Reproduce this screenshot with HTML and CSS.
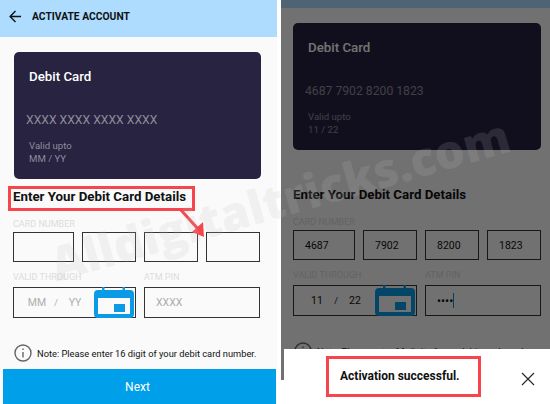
FILE: index.html
```html
<!DOCTYPE html>
<html>
<head>
  <meta charset="UTF-8">
  <title>Activate Account</title>
  <link rel="stylesheet" href="styles.css">
</head>
<body>
  <div class="page">

    <!-- before: empty form -->
    <div class="phone">
      <div class="topbar">
        <svg class="back-icon" viewBox="0 0 14 14"><path d="M13 7H1.500M7 1.200 1.200 7 7 12.800"/></svg>
        <span class="topbar-title">ACTIVATE ACCOUNT</span>
      </div>
      <div class="content">
        <div class="card">
          <div class="card-title">Debit Card</div>
          <div class="card-number">XXXX XXXX XXXX XXXX</div>
          <div class="card-meta">Valid upto</div>
          <div class="card-meta">MM / YY</div>
        </div>
        <h2 class="form-title">Enter Your Debit Card Details</h2>
        <div class="form-grid">
          <div class="field-label span-4">CARD NUMBER</div>
          <div class="field"></div>
          <div class="field"></div>
          <div class="field"></div>
          <div class="field"></div>
          <div class="field-label label-second span-2">VALID THROUGH</div>
          <div class="field-label label-second span-2">ATM PIN</div>
          <div class="field field-tall span-2 date-field placeholder">
            <span class="date-part">MM</span><span class="date-slash">/</span><span class="date-part">YY</span>
            <svg class="calendar-icon" viewBox="0 0 40 31"><path d="M8 0h2.500v3h18V0H31v3h5a4 4 0 0 1 4 4v20a4 4 0 0 1-4 4H4a4 4 0 0 1-4-4V7a4 4 0 0 1 4-4h4z"/><rect class="calendar-page" x="4" y="11" width="32" height="16"/><rect x="20" y="17" width="11" height="8"/></svg>
          </div>
          <div class="field field-tall span-2 placeholder">XXXX</div>
        </div>
        <div class="note">
          <svg class="info-icon" viewBox="0 0 18 18"><circle cx="9" cy="9" r="8"/><path d="M9 8v5.500M9 4.500v1.500"/></svg>
          <span>Note: Please enter 16 digit of your debit card number.</span>
        </div>
      </div>
      <div class="next-btn">Next</div>
      <div class="mark-box"></div>
      <svg class="mark-arrow" viewBox="0 0 30 34"><path d="M3 3 20 22"/><path class="mark-arrow-head" d="M26 30 14 25 25 15z"/></svg>
    </div>

    <!-- after: filled form with the bottom sheet -->
    <div class="phone phone-done">
      <div class="topbar"></div>
      <div class="content">
        <div class="card">
          <div class="card-title">Debit Card</div>
          <div class="card-number">4687 7902 8200 1823</div>
          <div class="card-meta">Valid upto</div>
          <div class="card-meta">11 / 22</div>
        </div>
        <h2 class="form-title">Enter Your Debit Card Details</h2>
        <div class="form-grid">
          <div class="field-label span-4">CARD NUMBER</div>
          <div class="field">4687</div>
          <div class="field">7902</div>
          <div class="field">8200</div>
          <div class="field">1823</div>
          <div class="field-label label-second span-2">VALID THROUGH</div>
          <div class="field-label label-second span-2">ATM PIN</div>
          <div class="field field-tall span-2 date-field">
            <span class="date-part">11</span><span class="date-slash">/</span><span class="date-part">22</span>
            <svg class="calendar-icon" viewBox="0 0 40 31"><path d="M8 0h2.500v3h18V0H31v3h5a4 4 0 0 1 4 4v20a4 4 0 0 1-4 4H4a4 4 0 0 1-4-4V7a4 4 0 0 1 4-4h4z"/><rect class="calendar-page" x="4" y="11" width="32" height="16"/><rect x="20" y="17" width="11" height="8"/></svg>
          </div>
          <div class="field field-tall span-2"><span class="pin-dots">••••</span><span class="caret"></span></div>
        </div>
        <div class="note">
          <svg class="info-icon" viewBox="0 0 18 18"><circle cx="9" cy="9" r="8"/><path d="M9 8v5.500M9 4.500v1.500"/></svg>
          <span>Note: Please enter 16 digit of your debit card number.</span>
        </div>
      </div>
      <div class="scrim"></div>
    </div>

    <div class="watermark">Alldigitaltricks.com</div>

    <div class="sheet">
      <div class="sheet-msg">Activation successful.</div>
      <svg class="close-icon" viewBox="0 0 14 14"><path d="M1 1 13 13M13 1 1 13"/></svg>
    </div>
  </div>
</body>
</html>
```

FILE: styles.css
```css
body {
  margin: 0;
  background: #fff;
  font-family: Roboto, "Liberation Sans", sans-serif;
  color: #111;
}
.page {
  position: relative;
  display: flex;
  gap: 4px;
  width: 550px;
  height: 404px;
  overflow: hidden;
}

/* phones */
.phone {
  position: relative;
  display: flex;
  flex-direction: column;
  width: 277px;
  height: 404px;
  background: #fafafa;
}
.phone-done {
  width: 269px;
  height: 380px;
  overflow: hidden;
}
.topbar {
  display: flex;
  align-items: center;
  gap: 10px;
  flex: none;
  box-sizing: border-box;
  height: 37px;
  padding: 0 0 5px 9px;
  background: #addcff;
}
.phone-done .topbar {
  height: 8px;
  padding: 0;
}
.back-icon {
  width: 13px;
  height: 13px;
  fill: none;
  stroke: #111;
  stroke-width: 1.5;
}
.topbar-title {
  font-size: 10.300px;
  font-weight: 700;
}
.content {
  flex: 1;
  padding: 15px 0 0 13px;
}
.phone-done .content {
  padding-left: 12px;
}

/* card */
.card {
  box-sizing: border-box;
  width: 247px;
  height: 127px;
  margin-left: 1px;
  padding: 18px 12px 0;
  background: #272340;
  border-radius: 5px;
  color: #8f8d9c;
}
.phone-done .card {
  width: 248px;
  margin-left: 0;
}
.card-title {
  margin: 0 0 28px 3px;
  font-size: 13.300px;
  font-weight: 500;
  line-height: 14px;
  color: #fff;
}
.card-number {
  margin-bottom: 11px;
  font-size: 12.200px;
  line-height: 16px;
}
.card-meta {
  margin-left: 3px;
  font-size: 9.600px;
  line-height: 13px;
}

/* form */
.form-title {
  margin: 9px 0 0;
  font-size: 13.300px;
  font-weight: 700;
  line-height: 18px;
}
.phone-done .form-title {
  margin-top: 36px;
}
.form-grid {
  display: grid;
  grid-template-columns: 61px 54px 54px 54px;
  column-gap: 8px;
  margin-top: 12px;
}
.phone-done .form-grid {
  grid-template-columns: 62px 54px 54px 54px;
}
.span-2 {
  grid-column: span 2;
}
.span-4 {
  grid-column: span 4;
}
.field-label {
  margin-bottom: 2px;
  font-size: 9px;
  line-height: 12px;
  color: #dcdcdc;
}
.label-second {
  margin-top: 9px;
  margin-bottom: 4px;
}
.field {
  box-sizing: border-box;
  display: flex;
  align-items: center;
  height: 30px;
  padding-left: 11px;
  border: 1px solid #333;
  font-size: 10.500px;
}
.field-tall {
  height: 31px;
}
.placeholder {
  color: #adadad;
}
.date-field {
  padding-left: 13px;
}
.date-part {
  width: 20px;
  text-align: center;
}
.date-slash {
  width: 18px;
  text-align: center;
  font-size: 9px;
}
.calendar-icon {
  flex: none;
  width: 40px;
  height: 31px;
  margin-left: auto;
  margin-right: 1px;
  fill: #0b9be6;
}
.calendar-page {
  fill: #fafafa;
}
.pin-dots {
  font-size: 12px;
}
.caret {
  width: 1px;
  height: 15px;
  margin-left: 0;
  background: #1487c6;
}
.note {
  display: flex;
  align-items: center;
  gap: 5px;
  margin: 26px 0 0 1px;
  font-size: 9.300px;
  white-space: nowrap;
}
.info-icon {
  flex: none;
  width: 18px;
  height: 18px;
  fill: none;
  stroke: #666;
  stroke-width: 1.4;
}
.next-btn {
  flex: none;
  box-sizing: border-box;
  height: 35px;
  margin: 0 1px 0 3px;
  padding-right: 4px;
  background: #009fe9;
  color: #fff;
  font-size: 12px;
  line-height: 37px;
  text-align: center;
}

/* overlays */
.scrim {
  position: absolute;
  inset: 0;
  background: rgba(0, 0, 0, 0.55);
}
.watermark {
  position: absolute;
  left: 42px;
  top: 174px;
  font-family: "Open Sans", sans-serif;
  font-size: 47px;
  font-weight: 800;
  line-height: 50px;
  white-space: nowrap;
  color: rgba(190, 190, 190, 0.17);
  transform: rotate(-16deg);
}
.sheet {
  position: absolute;
  left: 284px;
  top: 349px;
  right: 0;
  bottom: 0;
  background: #fff;
}
.sheet-msg {
  position: absolute;
  left: 42px;
  top: 7px;
  box-sizing: border-box;
  width: 155px;
  height: 41px;
  padding-left: 11px;
  border: 3px solid #f8454d;
  font-size: 12px;
  font-weight: 700;
  line-height: 35px;
}
.close-icon {
  position: absolute;
  left: 237px;
  top: 23px;
  width: 14px;
  height: 14px;
  fill: none;
  stroke: #222;
  stroke-width: 1.1;
}
.mark-box {
  position: absolute;
  left: 8px;
  top: 186px;
  width: 181px;
  height: 19px;
  border: 3px solid #f8454d;
}
.mark-arrow {
  position: absolute;
  left: 178px;
  top: 207px;
  width: 30px;
  height: 34px;
  fill: #f8454d;
  stroke: #f8454d;
  stroke-width: 3;
}
.mark-arrow-head {
  stroke: none;
}
```
